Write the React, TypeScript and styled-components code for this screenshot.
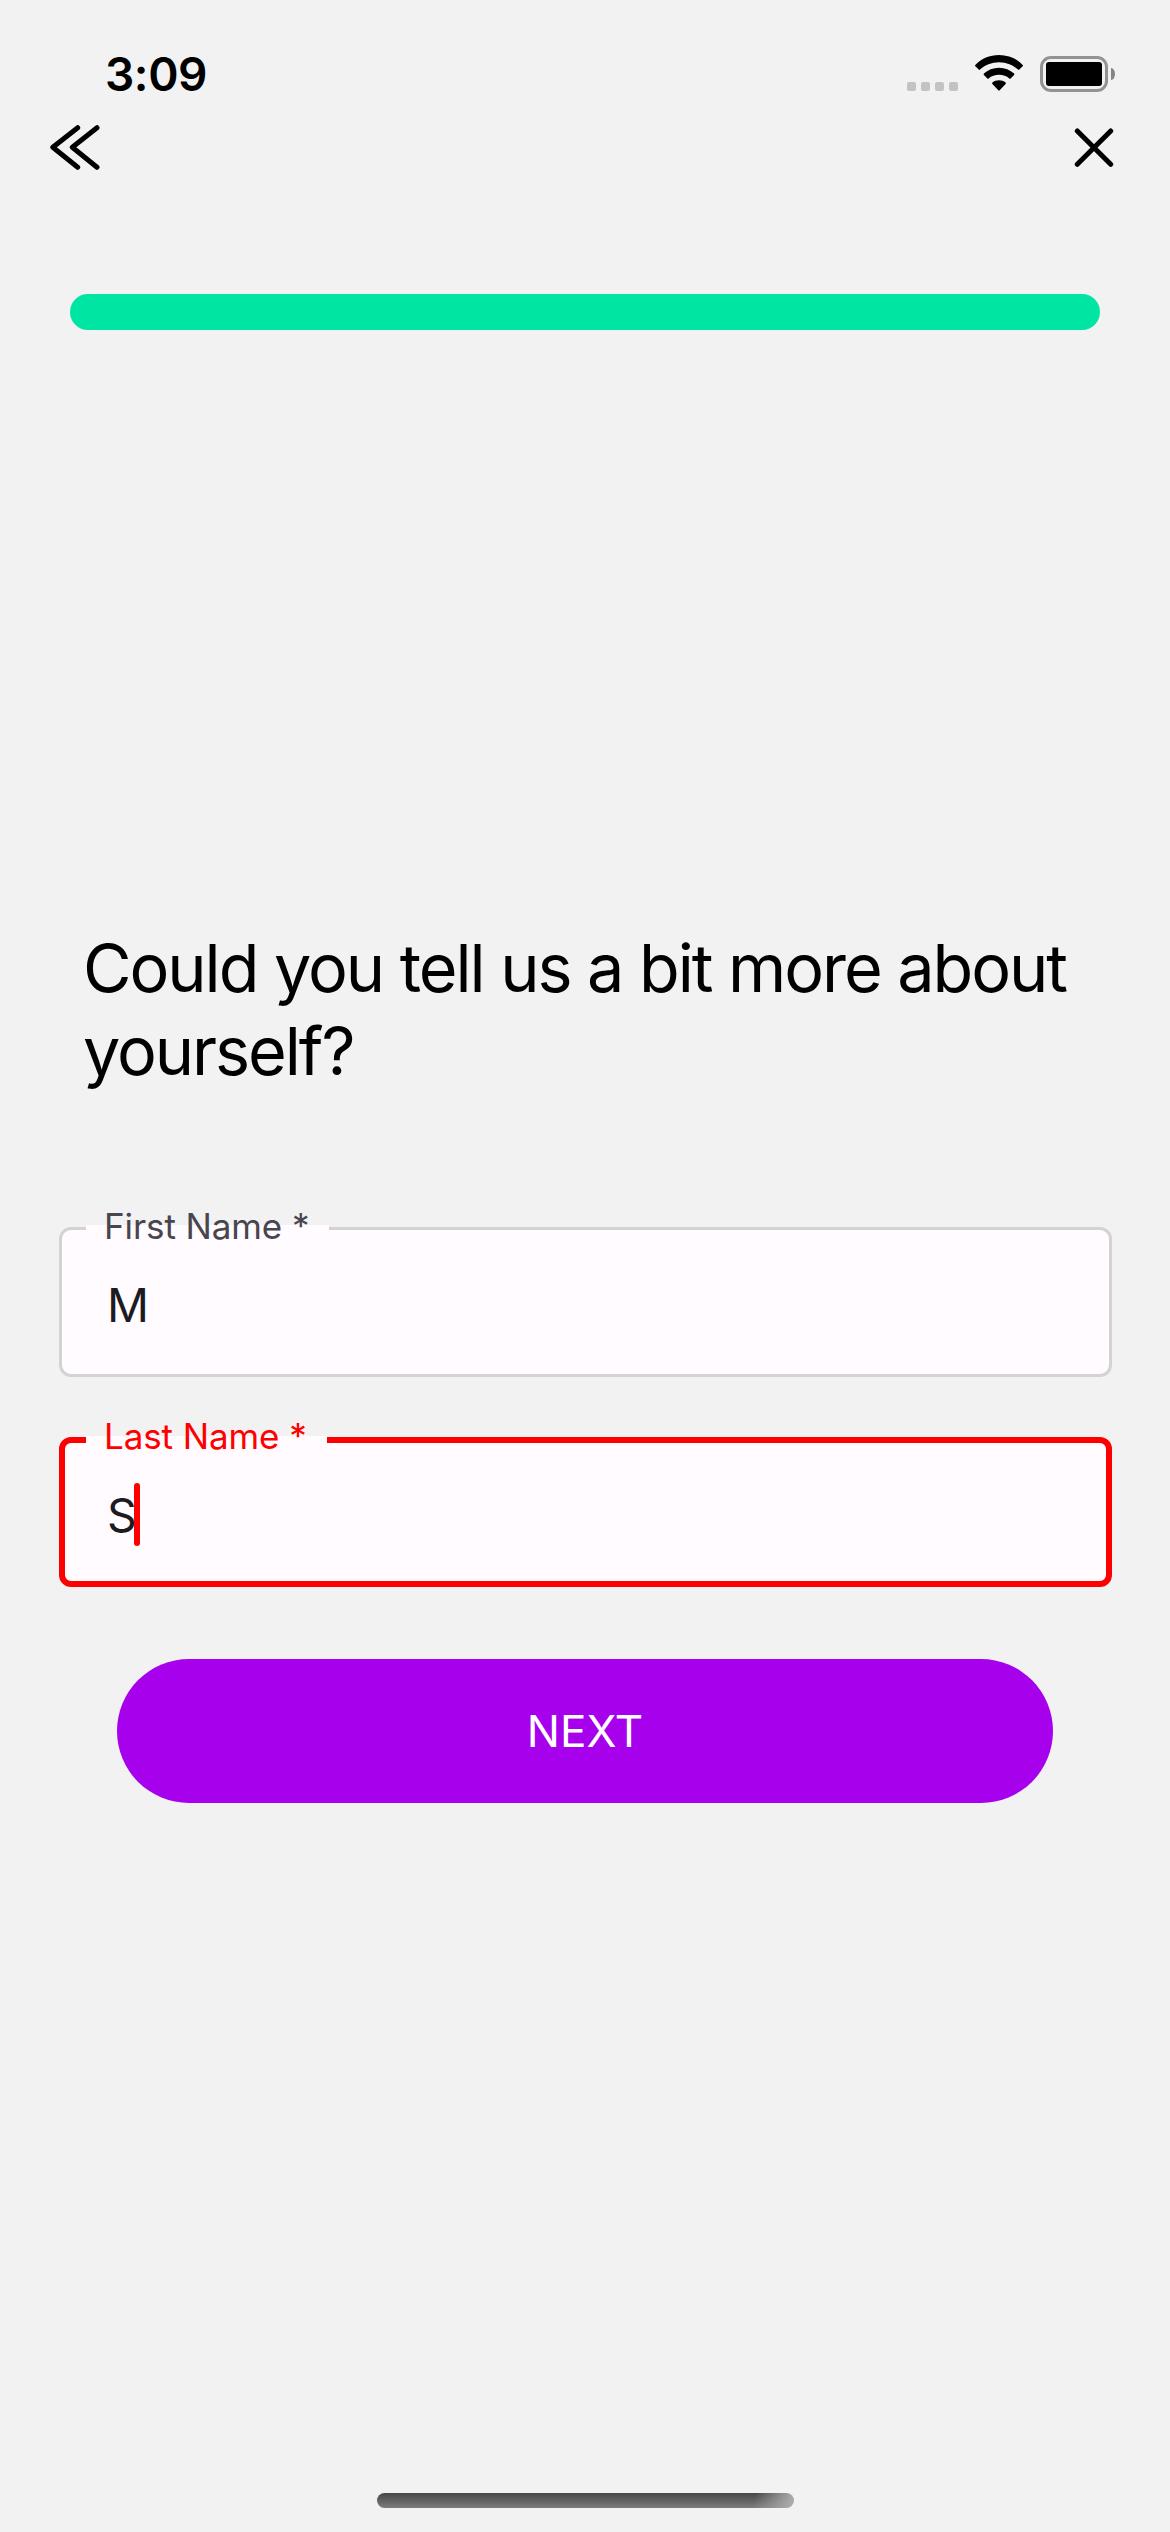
import React from "react";
import styled, { createGlobalStyle } from "styled-components";

const GlobalStyle = createGlobalStyle`
  *, *::before, *::after { box-sizing: border-box; }
  body {
    margin: 0;
    background: #f2f2f2;
    font-family: Inter, Roboto, "Liberation Sans", sans-serif;
  }
`;

const Screen = styled.main`
  width: 1170px;
  height: 2532px;
  display: flex;
  flex-direction: column;
  background: #f2f2f2;
  overflow: hidden;
`;

const StatusBar = styled.header`
  height: 110px;
  padding: 36px 55px 0 105px;
  display: flex;
  justify-content: space-between;
  align-items: flex-start;
`;

const Clock = styled.time`
  font-size: 46px;
  font-weight: 600;
  line-height: 76px;
  letter-spacing: -0.4px;
  color: #000;
`;

const Indicators = styled.div`
  height: 56px;
  display: flex;
  align-items: flex-end;
`;

const SignalDots = styled.div`
  display: flex;
  gap: 5px;
  margin: 0 17px 1px 0;
`;

const Dot = styled.i`
  width: 9px;
  height: 9px;
  border-radius: 2px;
  background: #c3c3c3;
`;

const WifiIcon = styled.svg`
  width: 48px;
  height: 36px;
  margin: 0 17px 1px 0;
`;

const Battery = styled.div`
  width: 68px;
  height: 36px;
  padding: 3px;
  border: 3px solid #939393;
  border-radius: 11px;
`;

const BatteryLevel = styled.div`
  height: 100%;
  border-radius: 3px;
  background: #000;
`;

const BatteryCap = styled.div`
  width: 4px;
  height: 12px;
  margin: 0 0 12px 3px;
  border-radius: 0 4px 4px 0 / 0 6px 6px 0;
  background: #858585;
`;

const NavBar = styled.nav`
  height: 76px;
  padding: 0 50px;
  display: flex;
  justify-content: space-between;
  align-items: center;
`;

const IconButton = styled.button`
  display: flex;
  padding: 0;
  border: 0;
  background: none;
`;

const StrokeIcon = styled.svg`
  fill: none;
  stroke: #000;
  stroke-width: 5;
  stroke-linecap: round;
  stroke-linejoin: round;
`;

const ProgressTrack = styled.div`
  height: 36px;
  margin: 108px 70px 0;
  border-radius: 18px;
  background: #00e5a2;
`;

const Form = styled.form`
  margin-top: 597px;
  display: flex;
  flex-direction: column;
`;

const Heading = styled.h1`
  margin: 0 50px 0 83px;
  font-size: 66.5px;
  font-weight: 400;
  line-height: 83px;
  letter-spacing: -2.06px;
  color: #000;
`;

const Fields = styled.div`
  margin: 134px 58px 0 59px;
  display: flex;
  flex-direction: column;
  gap: 60px;
`;

const FieldBox = styled.div<{ $active?: boolean }>`
  position: relative;
  height: 150px;
  padding-left: ${(p) => (p.$active ? 42 : 45)}px;
  display: flex;
  align-items: center;
  border: ${(p) => (p.$active ? "6px solid #ff0000" : "3px solid #d3d3d3")};
  border-radius: 12px;
  background: #fffbff;
`;

const Label = styled.label<{ $active?: boolean }>`
  position: absolute;
  left: ${(p) => (p.$active ? 21 : 24)}px;
  top: ${(p) => (p.$active ? -30 : -27)}px;
  width: ${(p) => (p.$active ? 241 : 243)}px;
  height: 46px;
  padding-left: 18px;
  font-size: 35px;
  line-height: 46px;
  letter-spacing: -0.1px;
  white-space: nowrap;
  color: ${(p) => (p.$active ? "#ff0000" : "#49454f")};
  background: linear-gradient(transparent ${(p) => (p.$active ? 23 : 22)}px, #fffbff 0);
`;

const Value = styled.span`
  padding-top: 6px;
  font-size: 46.5px;
  line-height: 60px;
  color: #1c1b1f;
`;

const Caret = styled.span`
  width: 6px;
  height: 63px;
  margin: 5px 0 0 -3px;
  border-radius: 3px;
  background: #ff0000;
`;

const NextButton = styled.button`
  height: 144px;
  margin: 72px 117px 0;
  padding: 0;
  border: 0;
  border-radius: 72px;
  background: #a600ec;
  color: #fff;
  font-family: inherit;
  font-size: 44px;
  font-weight: 400;
  line-height: 144px;
`;

const HomeIndicator = styled.div`
  width: 417px;
  height: 15px;
  margin: auto auto 24px 377px;
  border-radius: 8px;
  background:
    linear-gradient(105deg, rgba(170, 170, 170, 0) 90%, #aaa 99%),
    linear-gradient(#484848, #7c7c7c);
`;

type FieldProps = { label: string; value: string; active?: boolean };

const Field = ({ label, value, active }: FieldProps) => (
  <FieldBox $active={active}>
    <Label $active={active}>{label}</Label>
    <Value>{value}</Value>
    {active && <Caret />}
  </FieldBox>
);

export default function App() {
  return (
    <>
      <GlobalStyle />
      <Screen>
        <StatusBar>
          <Clock>3:09</Clock>
          <Indicators>
            <SignalDots>
              {[0, 1, 2, 3].map((n) => (
                <Dot key={n} />
              ))}
            </SignalDots>
            <WifiIcon viewBox="0 0 48 36">
              <path d="M24 0C33.300 0 41.800 3.700 47.700 9.900Q48.300 10.600 47.700 11.200L44.300 14.600Q43.700 15.200 43 14.600C38.100 10 31.400 7.200 24 7.200S9.900 10 5 14.600Q4.300 15.200 3.700 14.600L.3 11.200Q-.3 10.600 .3 9.900C6.200 3.700 14.700 0 24 0Z" />
              <path d="M24 12.700C29.900 12.700 35.200 14.900 39.100 18.600Q39.700 19.300 39.100 19.900L35.600 23.400Q35 24 34.300 23.400C31.600 21.100 28 19.800 24 19.800S16.400 21.100 13.700 23.400Q13 24 12.400 23.400L8.900 19.900Q8.300 19.300 8.900 18.600C12.800 14.900 18.100 12.700 24 12.700Z" />
              <path d="M24 25.200C26.500 25.200 28.800 26.100 30.600 27.500Q31.300 28.200 30.600 28.900L24.700 35.300Q24 36 23.300 35.300L17.400 28.900Q16.700 28.200 17.400 27.500C19.200 26.100 21.500 25.200 24 25.200Z" />
            </WifiIcon>
            <Battery>
              <BatteryLevel />
            </Battery>
            <BatteryCap />
          </Indicators>
        </StatusBar>
        <NavBar>
          <IconButton type="button" aria-label="Back">
            <StrokeIcon width="50" height="46" viewBox="50 125 50 46">
              <path d="M77.700 127.700L52.800 147.300L77.700 167.300M97 127.700L72.300 147.300L97 167.300" />
            </StrokeIcon>
          </IconButton>
          <IconButton type="button" aria-label="Close">
            <StrokeIcon width="46" height="46" viewBox="1074 125 46 46">
              <path d="M1077.300 131L1110.700 164.300M1110.700 131L1077.300 164.300" />
            </StrokeIcon>
          </IconButton>
        </NavBar>
        <ProgressTrack />
        <Form>
          <Heading>
            Could you tell us a bit more about
            <br />
            yourself?
          </Heading>
          <Fields>
            <Field label="First Name *" value="M" />
            <Field label="Last Name *" value="S" active />
          </Fields>
          <NextButton type="button">NEXT</NextButton>
        </Form>
        <HomeIndicator />
      </Screen>
    </>
  );
}
